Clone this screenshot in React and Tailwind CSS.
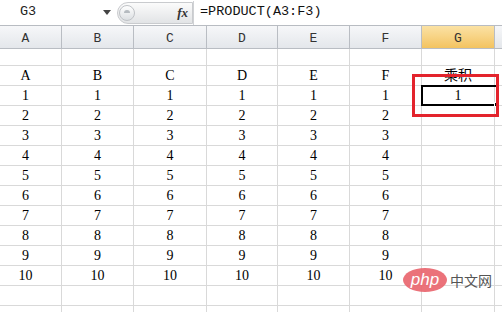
import React from "react";

const cols = ["A", "B", "C", "D", "E", "F", "G", ""];
const widths = [72, 72, 73, 71, 72, 72, 73, 72];
const gridCols = "grid grid-cols-[72px_72px_73px_71px_72px_72px_73px_72px]";

function Row({ cells, h }) {
  return (
    <div className={gridCols + " " + h}>
      {widths.map((w, i) => (
        <div
          key={i}
          className="border-r border-b border-[#d9d9d9] flex items-center justify-center text-[14px] text-black leading-none"
          style={{ fontFamily: '"Liberation Serif", "Noto Sans CJK SC", serif' }}
        >
          {cells ? cells[i] : ""}
        </div>
      ))}
    </div>
  );
}

export default function App() {
  const dataRows = [];
  for (let n = 1; n <= 10; n++) {
    dataRows.push([String(n), String(n), String(n), String(n), String(n), String(n), n === 1 ? "1" : "", ""]);
  }
  return (
    <div className="relative w-[502px] h-[312px] overflow-hidden bg-white">
      {/* formula bar */}
      <div className="h-[26px] border-b border-[#b8bcc2] flex items-center bg-white">
        <div
          className="w-[98px] pl-[20px] text-[13.5px] text-[#222]"
          style={{ fontFamily: '"Liberation Mono", monospace' }}
        >
          G3
        </div>
        <div className="w-[19px] flex items-center justify-start pl-[5px]">
          <svg width="8" height="5" viewBox="0 0 8 5">
            <path d="M0 0 L8 0 L4 5 Z" fill="#444" />
          </svg>
        </div>
        <div className="w-[76px] h-[22px] rounded-l-full border border-[#c9cbce] bg-gradient-to-b from-[#fbfbfb] to-[#e2e4e6] flex items-center justify-between pr-[4px]">
          <div className="w-[16px] h-[16px] ml-[1px] rounded-full border border-[#bfc2c6] bg-gradient-to-b from-[#ffffff] to-[#dcdfe2] flex items-start justify-center">
            <div className="mt-[4px] w-[6px] h-[3px] rounded-t-full bg-[#b6bbc0]" />
          </div>
          <span
            className="italic font-bold text-[13px] text-[#333]"
            style={{ fontFamily: '"Liberation Serif", serif' }}
          >
            fx
          </span>
        </div>
        <div className="w-px h-[24px] bg-[#d0d2d5]" />
        <div
          className="pl-[6px] text-[13.5px] text-[#111]"
          style={{ fontFamily: '"Liberation Mono", monospace' }}
        >
          =PRODUCT(A3:F3)
        </div>
      </div>

      {/* grid */}
      <div className="-ml-[10px]">
        {/* header */}
        <div className={gridCols + " h-[23px]"}>
          {cols.map((c, i) => (
            <div
              key={i}
              className={
                "border-r border-b border-[#b9bdc3] flex items-end justify-center pb-[3px] text-[13px] text-[#333] leading-none " +
                (c === "G"
                  ? "bg-gradient-to-b from-[#fbe2a4] to-[#f3c35f]"
                  : "bg-gradient-to-b from-[#f6f7f9] to-[#e4e7eb]")
              }
              style={{ fontFamily: '"Liberation Mono", monospace' }}
            >
              {c}
            </div>
          ))}
        </div>
        <Row h="h-[17px]" />
        <Row h="h-[20px]" cells={["A", "B", "C", "D", "E", "F", "乘积", ""]} />
        {dataRows.map((r, i) => (
          <Row key={i} h="h-[20px]" cells={r} />
        ))}
        <Row h="h-[20px]" />
        <Row h="h-[20px]" />
      </div>

      {/* selection border */}
      <div className="absolute left-[421px] top-[85px] w-[77px] h-[21px] border-2 border-black" />
      <div className="absolute left-[494px] top-[102px] w-[5px] h-[5px] bg-black border border-white" />

      {/* red highlight box */}
      <div className="absolute left-[412px] top-[74px] w-[87px] h-[43px] border-[3px] border-[#e3232c]" />

      {/* watermark */}
      <div className="absolute left-[403px] top-[268px] flex items-center gap-[3px]">
        <div className="w-[44px] h-[24px] rounded-[50%] bg-[#e9636b]/90 flex items-center justify-center">
          <span
            className="text-white italic text-[17px] leading-none -mt-[2px]"
            style={{ fontFamily: '"Liberation Sans", sans-serif' }}
          >
            php
          </span>
        </div>
        <span
          className="text-[14px] text-[#555] leading-none"
          style={{ fontFamily: '"Noto Sans CJK SC", sans-serif' }}
        >
          中文网
        </span>
      </div>
    </div>
  );
}
